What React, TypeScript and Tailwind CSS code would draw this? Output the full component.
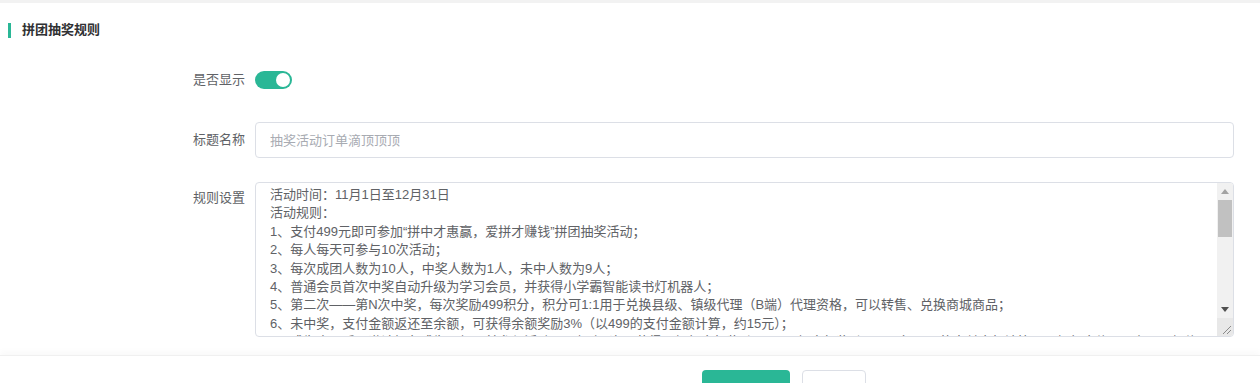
const rules = [
  '活动时间：11月1日至12月31日',
  '活动规则：',
  '1、支付499元即可参加“拼中才惠赢，爱拼才赚钱”拼团抽奖活动；',
  '2、每人每天可参与10次活动；',
  '3、每次成团人数为10人，中奖人数为1人，未中人数为9人；',
  '4、普通会员首次中奖自动升级为学习会员，并获得小学霸智能读书灯机器人；',
  '5、第二次——第N次中奖，每次奖励499积分，积分可1:1用于兑换县级、镇级代理（B端）代理资格，可以转售、兑换商城商品；',
  '6、未中奖，支付金额返还至余额，可获得余额奖励3%（以499的支付金额计算，约15元）；',
  '7、成为会员后，邀请好友成为下级，并参与活动，下级中1次可获得一级佣金额奖励1%，二级金额奖励0.3%（以499的支付金额计算，一级佣金约5元/人，二级约1.5元/人）；',
  '8、活动最终解释权归平台所有。',
].join('\n');

// fake classic scrollbar, headless chrome only draws overlay ones
function ScrollTrack() {
  return (
    <div className="w-[16px] shrink-0 flex flex-col bg-[#f1f1f1]">
      <div className="h-[17px] flex items-center justify-center">
        <svg width="8" height="5" viewBox="0 0 8 5">
          <path d="M0 5 L4 0 L8 5 Z" fill="#a3a3a3" />
        </svg>
      </div>
      <div className="mx-[1px] h-[37px] bg-[#c1c1c1]" />
      <div className="flex-1" />
      <div className="h-[17px] flex items-center justify-center">
        <svg width="8" height="5" viewBox="0 0 8 5">
          <path d="M0 0 L8 0 L4 5 Z" fill="#505050" />
        </svg>
      </div>
      <div className="h-[18px] bg-[#e8e8e8] flex items-end justify-end p-[2px]">
        <svg width="9" height="9" viewBox="0 0 9 9">
          <path d="M1 9 L9 1 M5 9 L9 5" stroke="#8a8a8a" strokeWidth="1" />
        </svg>
      </div>
    </div>
  );
}

export default function App() {
  return (
    <div
      className="w-[1260px] h-[383px] overflow-hidden bg-white text-[13px] text-[#606266]"
      style={{ fontFamily: '"Liberation Sans", "Noto Sans CJK SC", sans-serif' }}
    >
      <div className="h-[3px] bg-[#f2f2f2]" />
      <div className="h-[352px] bg-white">
        {/* header */}
        <div className="flex items-center gap-[11px] pl-[8px] pt-[18px] h-[36px]">
          <span className="w-[3px] h-[15px] bg-[#2ab796]" />
          <span className="font-bold text-[#303133] leading-5">拼团抽奖规则</span>
        </div>

        <div className="mt-[23px] flex flex-col gap-6 pr-[26px]">
          {/* switch */}
          <div className="flex items-center h-9">
            <label className="w-[245px] text-right leading-9">是否显示</label>
            <div className="ml-[10px] w-[37px] h-[18px] rounded-full bg-[#2ab796] flex items-center justify-end pr-[2px]">
              <span className="w-[14px] h-[14px] rounded-full bg-white" />
            </div>
          </div>

          {/* title */}
          <div className="flex items-center h-9">
            <label className="w-[245px] text-right leading-9">标题名称</label>
            <input
              className="ml-[10px] flex-1 h-9 px-[14px] border border-[#dcdfe6] rounded-[4px] outline-none placeholder:text-[#a8abb2] text-[13px]"
              placeholder="抽奖活动订单滴顶顶顶"
            />
          </div>

          {/* rules */}
          <div className="flex items-start">
            <label className="w-[245px] text-right leading-[32px]">规则设置</label>
            <div className="ml-[10px] flex-1 h-[155px] flex border border-[#dcdfe6] rounded-[4px] overflow-hidden">
              <textarea
                className="flex-1 h-full pl-[14px] pr-2 py-[3px] outline-none resize-none overflow-hidden leading-[18.4px] text-[13px] text-[#606266]"
                defaultValue={rules}
              />
              <ScrollTrack />
            </div>
          </div>
        </div>
      </div>

      {/* footer */}
      <div className="h-[28px] bg-white border-t border-[#f0f0f0] shadow-[0_-4px_6px_rgba(0,0,0,0.025)] flex items-start gap-3 pl-[702px] pt-[14px]">
        <button className="shrink-0 w-[88px] h-10 rounded-[4px] bg-[#2ab796] text-white text-[13px] pt-6">保存</button>
        <button className="shrink-0 w-[64px] h-10 rounded-[4px] border border-[#dcdfe6] bg-white text-[13px] text-[#606266] pt-6">取消</button>
      </div>
    </div>
  );
}
